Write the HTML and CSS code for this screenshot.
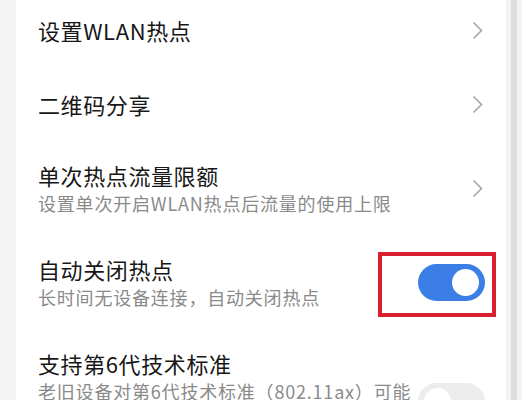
FILE: index.html
```html
<!DOCTYPE html>
<html>
<head>
    <title>WLAN热点设置</title>
    <link rel="stylesheet" href="styles.css">
</head>
<body>
    <div class="page">
        <div class="card">
            <div class="row single">
                <div class="text"><div class="title">设置WLAN热点</div></div>
                <svg class="chevron" width="11" height="19" viewBox="0 0 11 19"><polyline points="1.5,1.5 9.5,9.5 1.5,17.5" fill="none" stroke="#a6a6a6" stroke-width="1.6"/></svg>
            </div>
            <div class="row single">
                <div class="text"><div class="title">二维码分享</div></div>
                <svg class="chevron" width="11" height="19" viewBox="0 0 11 19"><polyline points="1.5,1.5 9.5,9.5 1.5,17.5" fill="none" stroke="#a6a6a6" stroke-width="1.6"/></svg>
            </div>
            <div class="row">
                <div class="text">
                    <div class="title">单次热点流量限额</div>
                    <div class="sub">设置单次开启WLAN热点后流量的使用上限</div>
                </div>
                <svg class="chevron" width="11" height="19" viewBox="0 0 11 19"><polyline points="1.5,1.5 9.5,9.5 1.5,17.5" fill="none" stroke="#a6a6a6" stroke-width="1.6"/></svg>
            </div>
            <div class="row">
                <div class="text">
                    <div class="title">自动关闭热点</div>
                    <div class="sub">长时间无设备连接，自动关闭热点</div>
                </div>
                <div class="switch on"><span class="knob"></span></div>
                <div class="mark"></div>
            </div>
            <div class="row top">
                <div class="text">
                    <div class="title">支持第6代技术标准</div>
                    <div class="sub">老旧设备对第6代技术标准（802.11ax）可能</div>
                </div>
                <div class="switch off"><span class="knob"></span></div>
            </div>
        </div>
        <div class="scroll"><div class="thumb"></div></div>
    </div>
</body>
</html>
```

FILE: styles.css
```css
body { margin: 0; background: #f3f3f3; font-family: "Noto Sans CJK SC", "Noto Sans", sans-serif; overflow: hidden; }
.page { display: flex; height: 400px; padding-left: 16px; }
.card { width: 490px; background: #fff; margin-top: -7px; }
.scroll { flex: 1; display: flex; padding-left: 5px; }
.thumb { width: 6px; background: #dedede; }

.row { position: relative; display: flex; align-items: center; height: 94px; padding: 0 21px 0 22px; }
.row.single { height: 74px; }
.row.top { align-items: flex-start; padding-top: 19px; box-sizing: border-box; }
.text { flex: 1; }
.title { font-size: 22px; line-height: 30px; letter-spacing: 0.6px; color: #171717; }
.sub { font-size: 18px; line-height: 26px; letter-spacing: 0.8px; color: #8a8a8a; white-space: nowrap; }
.chevron { margin-right: 2px; }

.switch { position: relative; width: 67px; height: 37px; border-radius: 19px; flex-shrink: 0; }
.switch.on { background: #3a7ee6; }
.switch.off { background: #ececec; }
.row.top .switch { margin-top: 35px; }
.knob { position: absolute; top: 5px; width: 27px; height: 27px; border-radius: 50%; background: #fff; }
.switch.on .knob { right: 6px; }
.switch.off .knob { left: 6px; }

.mark { position: absolute; left: 362px; top: 17px; width: 110px; height: 57px; border: 4px solid #d9202f; }
```
